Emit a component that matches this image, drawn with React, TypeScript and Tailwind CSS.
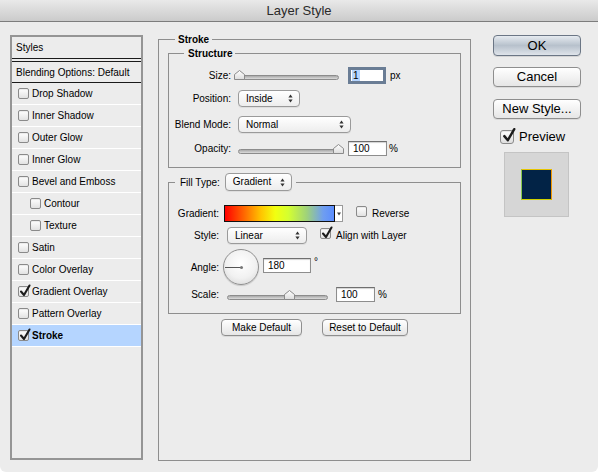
import React from 'react';

type BoxProps = { checked?: boolean; size?: 'sm' | 'lg' };

const Check = ({ checked = false, size = 'sm' }: BoxProps) => (
  <span
    className={
      size === 'lg'
        ? 'relative inline-block h-[14px] w-[14px] shrink-0 rounded-[3px] border border-[#8a8a8a] bg-gradient-to-b from-white to-[#dedede] shadow-[inset_0_1px_1px_rgba(0,0,0,0.1)]'
        : 'relative inline-block h-[11px] w-[11px] shrink-0 rounded-[2px] border border-[#8a8a8a] bg-gradient-to-b from-white to-[#e2e2e2] shadow-[inset_0_1px_1px_rgba(0,0,0,0.08)]'
    }
  >
    {checked && (
      <svg
        className={size === 'lg' ? 'absolute -top-[4px] left-[1px] h-[16px] w-[14px]' : 'absolute -top-[3px] left-[0px] h-[13px] w-[12px]'}
        viewBox="0 0 12 13"
        fill="none"
      >
        <path d="M2 7.5 L5 11 L10.5 1.5" stroke="#1c1c1c" strokeWidth="2.1" strokeLinecap="round" strokeLinejoin="round" />
      </svg>
    )}
  </span>
);

const Arrows = () => (
  <svg className="h-[9px] w-[5px] shrink-0" viewBox="0 0 5 9">
    <path d="M2.5 0.5 L4.6 3.4 L0.4 3.4 Z" fill="#333" />
    <path d="M2.5 8.5 L4.6 5.6 L0.4 5.6 Z" fill="#333" />
  </svg>
);

const PopUp = ({ value, className }: { value: string; className: string }) => (
  <div
    className={`flex items-center justify-between rounded-[4px] border border-[#9a9a9a] bg-gradient-to-b from-white to-[#ededed] pl-[7px] pr-[6px] shadow-[0_1px_0_rgba(0,0,0,0.06)] ${className}`}
  >
    <span className="leading-none">{value}</span>
    <Arrows />
  </div>
);

const Thumb = ({ left, top }: { left: number; top: number }) => (
  <svg className="absolute h-[10px] w-[11px]" style={{ left, top }} viewBox="0 0 11 10">
    <defs>
      <linearGradient id="thumbg" x1="0" y1="0" x2="0" y2="1">
        <stop offset="0" stopColor="#ffffff" />
        <stop offset="1" stopColor="#dcdcdc" />
      </linearGradient>
    </defs>
    <path d="M0.5 9.5 L0.5 4.5 L5.5 0.5 L10.5 4.5 L10.5 9.5 Z" fill="url(#thumbg)" stroke="#8a8a8a" />
  </svg>
);

// track is 101px wide, value is thumb centre in px along the track
const Slider = ({ value }: { value: number }) => (
  <div className="relative h-[12px] w-[101px] shrink-0">
    <div className="absolute left-0 top-[6px] h-[5px] w-[101px] rounded-full border border-[#8c8c8c] bg-gradient-to-b from-[#a9a9a9] to-[#dcdcdc]" />
    <Thumb left={value - 5} top={1} />
  </div>
);

const Field = ({ value, className }: { value: string; className: string }) => (
  <div
    className={`flex items-center border border-[#8d8d8d] border-t-[#6f6f6f] bg-white pl-[4px] shadow-[inset_0_1px_1px_rgba(0,0,0,0.18)] ${className}`}
  >
    <span className="leading-none">{value}</span>
  </div>
);

const Btn = ({ label, className }: { label: string; className: string }) => (
  <div
    className={`flex items-center justify-center rounded-[4px] border border-[#8e8e8e] bg-gradient-to-b from-white to-[#e6e6e6] shadow-[0_1px_0_rgba(0,0,0,0.08)] ${className}`}
  >
    {label}
  </div>
);

const items: { label: string; checked?: boolean; nested?: boolean; active?: boolean }[] = [
  { label: 'Drop Shadow' },
  { label: 'Inner Shadow' },
  { label: 'Outer Glow' },
  { label: 'Inner Glow' },
  { label: 'Bevel and Emboss' },
  { label: 'Contour', nested: true },
  { label: 'Texture', nested: true },
  { label: 'Satin' },
  { label: 'Color Overlay' },
  { label: 'Gradient Overlay', checked: true },
  { label: 'Pattern Overlay' },
  { label: 'Stroke', checked: true, active: true },
];

export default function App() {
  return (
    <div className="h-[473px] w-[598px] overflow-hidden bg-white font-['Liberation_Sans',Arial,sans-serif] text-[10px] text-black">
      <div className="h-[472px] overflow-hidden rounded-b-[6px] bg-[#ececec]">
        {/* title bar */}
        <div className="flex h-[22px] items-center justify-center border-b border-[#7d7d7d] bg-gradient-to-b from-[#e9e9e9] to-[#cbcbcb] text-[13px] text-[#2a2a2a]">
          Layer Style
        </div>

        <div className="flex items-start pl-[10px] pt-[11px]">
          {/* styles list */}
          <div className="mt-[2px] h-[425px] w-[133px] shrink-0 border-2 border-[#959595] bg-[#ececec]">
            <div className="flex h-[21px] items-center pl-[4px]">Styles</div>
            <div className="h-[4px] border-y border-[#1a1a1a]" />
            <div className="flex h-[21px] items-center border-b border-[#1a1a1a] pl-[4px]">Blending Options: Default</div>
            {items.map((it) => (
              <div
                key={it.label}
                className={`flex h-[22px] items-center gap-[3px] border-b border-white ${it.nested ? 'pl-[18px]' : 'pl-[6px]'} ${it.active ? 'bg-[#b5d5ff] font-bold' : ''}`}
              >
                <Check checked={it.checked} />
                <span>{it.label}</span>
              </div>
            ))}
          </div>

          {/* centre panel */}
          <fieldset className="ml-[15px] h-[428px] w-[313px] shrink-0 border border-[#8e8e8e] px-[9px]">
            <legend className="ml-[7px] px-[3px] text-[10px] font-bold leading-[13px]">Stroke</legend>

            <fieldset className="mt-[1px] border border-[#8e8e8e] pb-[11px]">
              <legend className="ml-[15px] pl-[4px] pr-[3px] font-bold leading-[13px]">Structure</legend>

              <div className="mt-[6px] flex h-[18px] items-center">
                <span className="w-[62px] text-right">Size:</span>
                <div className="ml-[7px]">
                  <Slider value={1} />
                </div>
                <div className="ml-[9px] flex h-[17px] w-[38px] items-center border-[3px] border-[#6a7d95] bg-white pl-[1px]">
                  <span className="bg-[#b5d5ff] px-[1px] leading-[11px]">1</span>
                </div>
                <span className="ml-[4px]">px</span>
              </div>

              <div className="mt-[6px] flex h-[17px] items-center">
                <span className="w-[62px] text-right">Position:</span>
                <PopUp value="Inside" className="ml-[7px] h-[17px] w-[62px]" />
              </div>

              <div className="mt-[9px] flex h-[17px] items-center">
                <span className="w-[62px] text-right">Blend Mode:</span>
                <PopUp value="Normal" className="ml-[7px] h-[17px] w-[113px]" />
              </div>

              <div className="mt-[8px] flex h-[15px] items-center">
                <span className="w-[62px] text-right">Opacity:</span>
                <div className="ml-[7px]">
                  <Slider value={100} />
                </div>
                <Field value="100" className="ml-[9px] h-[15px] w-[39px]" />
                <span className="ml-[2px]">%</span>
              </div>
            </fieldset>

            <fieldset className="mt-[5px] border border-[#8e8e8e] pb-[11px]">
              <legend className="ml-[6px] pl-[5px] pr-[4px]">
                <div className="flex h-[18px] items-center gap-[5px]">
                  <span>Fill Type:</span>
                  <PopUp value="Gradient" className="h-[18px] w-[67px]" />
                </div>
              </legend>

              <div className="mt-[14px] flex h-[17px] items-center">
                <span className="w-[50px] text-right">Gradient:</span>
                <div className="ml-[5px] h-[17px] w-[111px] border border-[#111] bg-[linear-gradient(to_right,#ff0000_0%,#ff6a00_18%,#ffc400_33%,#f2ff10_46%,#d4ff30_58%,#9fd27a_75%,#6f9ef0_90%,#5b8dff_100%)]" />
                <div className="flex h-[17px] w-[8px] items-center justify-center border border-l-0 border-[#9a9a9a] bg-white">
                  <svg className="h-[4px] w-[4px]" viewBox="0 0 4 4">
                    <path d="M0 0.5 L4 0.5 L2 3.5 Z" fill="#444" />
                  </svg>
                </div>
                <span className="ml-[13px]">
                  <Check />
                </span>
                <span className="ml-[5px]">Reverse</span>
              </div>

              <div className="mt-[5px] flex h-[17px] items-center">
                <span className="w-[50px] text-right">Style:</span>
                <PopUp value="Linear" className="ml-[8px] h-[17px] w-[80px]" />
                <span className="ml-[13px]">
                  <Check checked />
                </span>
                <span className="ml-[5px]">Align with Layer</span>
              </div>

              <div className="mt-[5px] flex h-[36px] items-center">
                <span className="w-[50px] text-right">Angle:</span>
                <div className="relative ml-[4px] h-[36px] w-[36px] shrink-0 rounded-full border border-[#8f8f8f] bg-[radial-gradient(circle_at_50%_40%,#ffffff_0%,#f1f1f1_55%,#d2d2d2_100%)] shadow-[0_1px_1px_rgba(0,0,0,0.15)]">
                  <div className="absolute left-[1px] top-[17px] h-px w-[17px] bg-[#555]" />
                  <div className="absolute left-[16px] top-[16px] h-[3px] w-[3px] rounded-full bg-[#777]" />
                </div>
                <Field value="180" className="ml-[4px] -mt-[3px] h-[15px] w-[48px]" />
                <span className="ml-[3px] -mt-[12px]">°</span>
              </div>

              <div className="mt-[2px] flex h-[15px] items-center">
                <span className="w-[50px] text-right">Scale:</span>
                <div className="ml-[8px]">
                  <Slider value={62} />
                </div>
                <Field value="100" className="ml-[8px] h-[15px] w-[39px]" />
                <span className="ml-[3px]">%</span>
              </div>
            </fieldset>

            <div className="mt-[5px] flex justify-center gap-[20px]">
              <Btn label="Make Default" className="h-[17px] w-[81px]" />
              <Btn label="Reset to Default" className="h-[17px] w-[86px]" />
            </div>
          </fieldset>

          {/* right column */}
          <div className="ml-[22px] mt-[2px] flex w-[88px] shrink-0 flex-col text-[13px]">
            <div className="flex h-[21px] items-center justify-center rounded-[4px] border border-[#6b7685] bg-gradient-to-b from-[#e6ebf0] via-[#b7c1cc] to-[#dfe4ea] shadow-[0_1px_0_rgba(0,0,0,0.1)]">
              OK
            </div>
            <Btn label="Cancel" className="mt-[11px] h-[20px]" />
            <Btn label="New Style..." className="mt-[12px] h-[20px]" />
            <div className="ml-[7px] mt-[11px] flex h-[14px] items-center gap-[5px]">
              <Check checked size="lg" />
              <span>Preview</span>
            </div>
            <div className="ml-[11px] mt-[8px] flex h-[65px] w-[65px] items-center justify-center border border-[#c4c4c4] bg-[#d6d6d6]">
              <div className="h-[31px] w-[31px] border border-l-[#86c84a] border-t-[#e6c400] border-r-[#f29800] border-b-[#cfd000] bg-[#022346]" />
            </div>
          </div>
        </div>
      </div>
    </div>
  );
}
